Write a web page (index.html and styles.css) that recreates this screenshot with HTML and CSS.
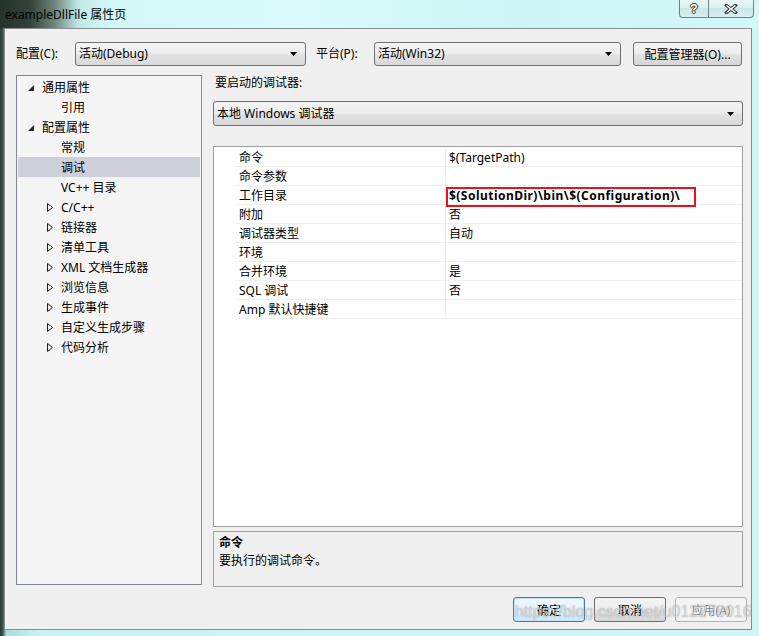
FILE: index.html
```html
<!DOCTYPE html>
<html lang="zh-CN">
<head>
<meta charset="utf-8">
<title>exampleDllFile 属性页</title>
<link rel="stylesheet" href="styles.css">
</head>
<body>
<div class="window">
  <div class="titlebar">
    <span class="title">exampleDllFile 属性页</span>
    <div class="caption">
      <div class="cap help"><span class="qm">?</span></div>
      <div class="cap close">
        <svg width="14" height="10" viewBox="0 0 14 10"><path d="M2.5 1.5 L11.5 8.5 M11.5 1.5 L2.5 8.5" stroke="#3a3a3a" stroke-width="3.4" stroke-linecap="square" fill="none"/><path d="M2.5 1.5 L11.5 8.5 M11.5 1.5 L2.5 8.5" stroke="#ffffff" stroke-width="1.4" fill="none"/></svg>
      </div>
    </div>
  </div>
  <div class="client">
    <div class="toprow">
      <span class="lbl lbl1">配置(C):</span>
      <div class="combo c1"><span>活动(Debug)</span><svg class="arr" width="7" height="4" viewBox="0 0 7 4"><polygon points="0,0 7,0 3.5,4" fill="#000"/></svg></div>
      <span class="lbl lbl2">平台(P):</span>
      <div class="combo c2"><span>活动(Win32)</span><svg class="arr" width="7" height="4" viewBox="0 0 7 4"><polygon points="0,0 7,0 3.5,4" fill="#000"/></svg></div>
      <div class="btn mgr">配置管理器(O)...</div>
    </div>
    <div class="main">
      <div class="tree">
        <div class="row l0"><span class="tw"><svg width="6" height="6" viewBox="0 0 6 6"><polygon points="6,0 6,6 0,6" fill="#262626"/></svg></span>通用属性</div>
        <div class="row l1">引用</div>
        <div class="row l0"><span class="tw"><svg width="6" height="6" viewBox="0 0 6 6"><polygon points="6,0 6,6 0,6" fill="#262626"/></svg></span>配置属性</div>
        <div class="row l1">常规</div>
        <div class="row l1 sel">调试</div>
        <div class="row l1">VC++ 目录</div>
        <div class="row l1c"><span class="tw"><svg width="6" height="9" viewBox="0 0 6 9"><polygon points="0.5,0.5 5.5,4.5 0.5,8.5" fill="#fff" stroke="#1e1e1e" stroke-width="1"/></svg></span>C/C++</div>
        <div class="row l1c"><span class="tw"><svg width="6" height="9" viewBox="0 0 6 9"><polygon points="0.5,0.5 5.5,4.5 0.5,8.5" fill="#fff" stroke="#1e1e1e" stroke-width="1"/></svg></span>链接器</div>
        <div class="row l1c"><span class="tw"><svg width="6" height="9" viewBox="0 0 6 9"><polygon points="0.5,0.5 5.5,4.5 0.5,8.5" fill="#fff" stroke="#1e1e1e" stroke-width="1"/></svg></span>清单工具</div>
        <div class="row l1c"><span class="tw"><svg width="6" height="9" viewBox="0 0 6 9"><polygon points="0.5,0.5 5.5,4.5 0.5,8.5" fill="#fff" stroke="#1e1e1e" stroke-width="1"/></svg></span>XML 文档生成器</div>
        <div class="row l1c"><span class="tw"><svg width="6" height="9" viewBox="0 0 6 9"><polygon points="0.5,0.5 5.5,4.5 0.5,8.5" fill="#fff" stroke="#1e1e1e" stroke-width="1"/></svg></span>浏览信息</div>
        <div class="row l1c"><span class="tw"><svg width="6" height="9" viewBox="0 0 6 9"><polygon points="0.5,0.5 5.5,4.5 0.5,8.5" fill="#fff" stroke="#1e1e1e" stroke-width="1"/></svg></span>生成事件</div>
        <div class="row l1c"><span class="tw"><svg width="6" height="9" viewBox="0 0 6 9"><polygon points="0.5,0.5 5.5,4.5 0.5,8.5" fill="#fff" stroke="#1e1e1e" stroke-width="1"/></svg></span>自定义生成步骤</div>
        <div class="row l1c"><span class="tw"><svg width="6" height="9" viewBox="0 0 6 9"><polygon points="0.5,0.5 5.5,4.5 0.5,8.5" fill="#fff" stroke="#1e1e1e" stroke-width="1"/></svg></span>代码分析</div>
      </div>
      <div class="right">
        <div class="dbg-label">要启动的调试器:</div>
        <div class="combo c3"><span>本地 Windows 调试器</span><svg class="arr" width="7" height="4" viewBox="0 0 7 4"><polygon points="0,0 7,0 3.5,4" fill="#000"/></svg></div>
        <div class="grid">
          <div class="gr"><span class="m"></span><span class="n">命令</span><span class="v">$(TargetPath)</span></div>
          <div class="gr"><span class="m"></span><span class="n">命令参数</span><span class="v"></span></div>
          <div class="gr"><span class="m"></span><span class="n">工作目录</span><span class="v"><b>$(SolutionDir)\bin\$(Configuration)\</b><span class="mark"></span></span></div>
          <div class="gr"><span class="m"></span><span class="n">附加</span><span class="v">否</span></div>
          <div class="gr"><span class="m"></span><span class="n">调试器类型</span><span class="v">自动</span></div>
          <div class="gr"><span class="m"></span><span class="n">环境</span><span class="v"></span></div>
          <div class="gr"><span class="m"></span><span class="n">合并环境</span><span class="v">是</span></div>
          <div class="gr"><span class="m"></span><span class="n">SQL 调试</span><span class="v">否</span></div>
          <div class="gr"><span class="m"></span><span class="n">Amp 默认快捷键</span><span class="v"></span></div>
        </div>
        <div class="desc">
          <div class="dt">命令</div>
          <div>要执行的调试命令。</div>
        </div>
      </div>
    </div>
    <div class="buttons">
      <div class="btn ok">确定</div>
      <div class="btn">取消</div>
      <div class="btn dis">应用(A)</div>
    </div>
  </div>
  <div class="watermark">https://blog.csdn.net/u012278016</div>
</div>
</body>
</html>
```
FILE: styles.css
```css
* { box-sizing: border-box; }
html, body { margin: 0; padding: 0; }
body {
  width: 759px;
  height: 636px;
  overflow: hidden;
  font-family: "Noto Sans", "Noto Sans CJK SC", sans-serif;
  font-size: 12px;
  color: #000;
}
.window {
  position: relative;
  width: 759px;
  height: 636px;
  display: flex;
  flex-direction: column;
  background: linear-gradient(90deg, #2b3a33 0, #40544a 3px, #a9dcdc 6px, #c8f3f3 40px, #d2f7f7 100%);
}
.titlebar {
  height: 28px;
  flex: none;
  display: flex;
  justify-content: space-between;
  align-items: flex-start;
  background: linear-gradient(90deg, #25322b 0, #33423a 30px, #6d877f 55px, #bfe8e6 78px, #d3f8f8 110px, #d9fbfb 300px, #cdf5f5 520px, #d3f8f8 100%);
}
.title { padding: 7px 0 0 5px; line-height: 16px; }
.caption { display: flex; margin-right: 5px; }
.cap {
  height: 18px;
  border: 1px solid #6f8184;
  border-top: none;
  display: flex;
  align-items: center;
  justify-content: center;
  background: linear-gradient(#eaf7f8, #d8eff0 50%, #c9e6e8 50%, #d8f0f2);
}
.help { width: 29px; border-right: none; border-radius: 0 0 0 4px; }
.close { width: 46px; border-radius: 0 0 4px 0; }
.qm {
  font-family: "Liberation Sans", sans-serif;
  font-weight: bold;
  font-size: 13px;
  line-height: 13px;
  color: #fff;
  text-shadow: 1px 0 #333, -1px 0 #333, 0 1px #333, 0 -1px #333;
}
.client {
  margin: 0 7px 0 4px;
  height: 602px;
  flex: none;
  border: 1px solid #868d8d;
  background: #f0f0f0;
  display: flex;
  flex-direction: column;
}
.toprow {
  display: flex;
  align-items: center;
  margin-top: 13px;
  padding-left: 11px;
  height: 24px;
}
.lbl { line-height: 24px; white-space: nowrap; }
.lbl1 { width: 59px; }
.lbl2 { width: 58px; margin-left: 10px; }
.combo {
  height: 24px;
  border: 1px solid #707070;
  border-radius: 3px;
  background: linear-gradient(#f5f5f5 0, #ededed 45%, #e2e2e2 55%, #d9d9d9 100%);
  padding: 0 8px 0 3px;
  line-height: 22px;
  display: flex;
  justify-content: space-between;
  align-items: center;
  white-space: nowrap;
}
.c1 { width: 231px; }
.c2 { width: 247px; }
.c3 { width: 530px; height: 25px; margin-top: 11px; }
.btn {
  height: 24px;
  border: 1px solid #707070;
  border-radius: 3px;
  background: linear-gradient(#f5f5f5 0, #ededed 45%, #e0e0e0 55%, #d6d6d6 100%);
  display: flex;
  align-items: center;
  justify-content: center;
  white-space: nowrap;
}
.mgr { width: 109px; margin-left: 12px; }
.main {
  display: flex;
  margin-top: 9px;
  padding-left: 11px;
}
.tree {
  width: 186px;
  height: 510px;
  border: 1px solid #828790;
  background: #f5f5f5;
  padding: 1px;
}
.row {
  height: 20px;
  display: flex;
  align-items: center;
  white-space: nowrap;
}
.row.sel { background: #cdcfdb; }
.l0 { padding-left: 10px; }
.l1 { padding-left: 43px; }
.l1c { padding-left: 29px; }
.tw { width: 14px; display: flex; align-items: center; }
.l0 .tw svg { margin-top: 1px; }
.right {
  width: 530px;
  margin-left: 11px;
  display: flex;
  flex-direction: column;
}
.dbg-label { height: 15px; line-height: 15px; padding-left: 2px; }
.grid {
  margin-top: 20px;
  height: 381px;
  border: 1px solid #a0a0a0;
  background: #fff;
  padding-top: 1px;
}
.gr {
  display: grid;
  grid-template-columns: 21px 211px 1fr;
  height: 19px;
}
.gr .n {
  border-bottom: 1px solid #f0f0f0;
  border-right: 1px solid #f0f0f0;
  padding: 1px 0 0 4px;
  line-height: 17px;
  white-space: nowrap;
}
.gr .v {
  position: relative;
  border-bottom: 1px solid #f0f0f0;
  padding: 1px 0 0 3px;
  line-height: 17px;
  white-space: nowrap;
}
.gr .v b { font-weight: bold; letter-spacing: 0.47px; }
.mark {
  position: absolute;
  left: 0;
  top: 1px;
  width: 250px;
  height: 20px;
  border: 2px solid #e3141b;
}
.desc {
  margin-top: 4px;
  height: 56px;
  border: 1px solid #a0a0a0;
  background: #f0f0f0;
  padding: 2px 5px 0;
  line-height: 18px;
}
.dt { font-weight: bold; }
.buttons {
  display: flex;
  justify-content: flex-end;
  gap: 9px;
  margin-top: 10px;
  padding-right: 4px;
}
.buttons .btn { width: 72px; height: 25px; }
.btn.ok {
  border-color: #3c7fb1;
  background: linear-gradient(#f3f9fd 0, #e6f3fb 45%, #d8ecf8 55%, #cfe6f5 100%);
  box-shadow: inset 0 0 0 1px #bfe2f7;
}
.btn.dis {
  border-color: #adb2b5;
  background: #f4f4f4;
  color: #838383;
}
.watermark {
  position: absolute;
  left: 515px;
  top: 602px;
  font-family: "Liberation Sans", sans-serif;
  font-size: 16px;
  line-height: 20px;
  color: rgba(255, 255, 255, 0.55);
  text-shadow: 0 0 1px rgba(110, 110, 110, 0.7);
  white-space: nowrap;
}
```
